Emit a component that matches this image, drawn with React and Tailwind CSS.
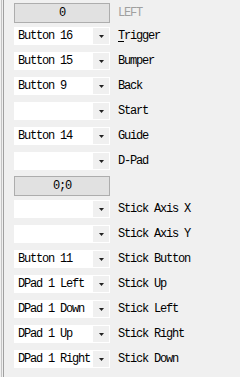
const top = [
  { value: "Button 16", label: "Trigger", mnemonic: true },
  { value: "Button 15", label: "Bumper" },
  { value: "Button 9", label: "Back" },
  { value: "", label: "Start" },
  { value: "Button 14", label: "Guide" },
  { value: "", label: "D-Pad" },
];

const stick = [
  { value: "", label: "Stick Axis X" },
  { value: "", label: "Stick Axis Y" },
  { value: "Button 11", label: "Stick Button" },
  { value: "DPad 1 Left", label: "Stick Up" },
  { value: "DPad 1 Down", label: "Stick Left" },
  { value: "DPad 1 Up", label: "Stick Right" },
  { value: "DPad 1 Right", label: "Stick Down" },
];

const font = { fontFamily: '"Liberation Mono", "DejaVu Sans Mono", monospace' };

function Arrow() {
  return (
    <svg width="5" height="3" viewBox="0 0 5 3" className="block">
      <path d="M0 0h5L2.5 3z" fill="#222" />
    </svg>
  );
}

function Combo({ value }) {
  return (
    <div className="flex h-[18px] w-[96px] items-stretch bg-white p-[1px]">
      <div className="flex flex-1 items-center pl-[3px] whitespace-nowrap">{value}</div>
      <div className="flex w-[16px] items-center justify-center bg-[#f0f0f0]">
        <Arrow />
      </div>
    </div>
  );
}

function Row({ value, label, mnemonic }) {
  return (
    <div className="flex items-center gap-[8px]">
      <Combo value={value} />
      <span className="whitespace-nowrap">
        {mnemonic ? (
          <>
            <span className="underline underline-offset-2">{label[0]}</span>
            {label.slice(1)}
          </>
        ) : (
          label
        )}
      </span>
    </div>
  );
}

function ValueButton({ text, label }) {
  return (
    <div className="flex items-center gap-[8px]">
      <div className="flex h-[20px] w-[96px] items-center justify-center border border-[#adadad] bg-[#e1e1e1]">
        {text}
      </div>
      {label ? <span className="text-[#a0a0a0]">{label}</span> : null}
    </div>
  );
}

export default function App() {
  return (
    <div
      className="h-[377px] w-[240px] bg-[#f0f0f0] text-[12px] leading-none tracking-[-1.2px] text-black"
      style={font}
    >
      <div className="ml-[1px] h-full border-l border-[#c4c4c4] pl-[1px]">
        <div className="h-full border-l border-[#a0a0a0] pl-[10px] pt-[3px]">
          <ValueButton text="0" label="LEFT" />
          <div className="mt-[4px] flex flex-col gap-[7px]">
            {top.map((r) => (
              <Row key={r.label} {...r} />
            ))}
          </div>
          <div className="mt-[6px]">
            <ValueButton text="0;0" />
          </div>
          <div className="mt-[4px] flex flex-col gap-[7px]">
            {stick.map((r) => (
              <Row key={r.label} {...r} />
            ))}
          </div>
        </div>
      </div>
    </div>
  );
}
